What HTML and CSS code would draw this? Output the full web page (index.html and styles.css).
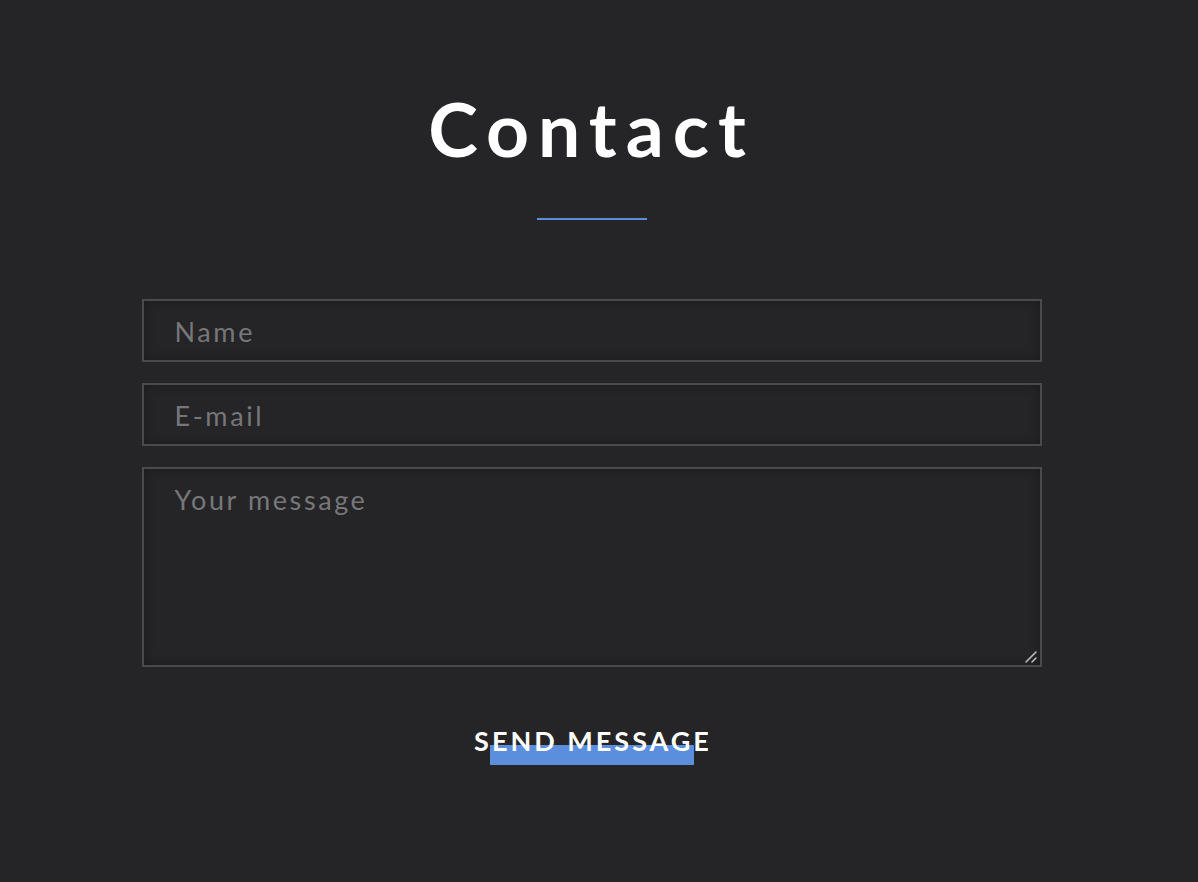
FILE: index.html
```html
<!DOCTYPE html>
<html lang="en">
<head>
<meta charset="utf-8">
<title>Contact</title>
<link rel="stylesheet" href="styles.css">
</head>
<body>
<main class="page">
  <section class="contact">
    <h1 class="title">Contact</h1>
    <div class="rule"></div>
    <form class="form">
      <input class="field" type="text" placeholder="Name">
      <input class="field" type="email" placeholder="E-mail">
      <div class="area-wrap">
        <textarea class="field area" placeholder="Your message"></textarea>
        <span class="grip" aria-hidden="true">
          <svg width="14" height="14" viewBox="0 0 14 14">
            <line x1="2" y1="12" x2="12" y2="2" stroke="#bbb" stroke-width="1.6" stroke-linecap="round"/>
            <line x1="8" y1="12" x2="12" y2="8" stroke="#bbb" stroke-width="1.6" stroke-linecap="round"/>
          </svg>
        </span>
      </div>
      <div class="actions">
        <button class="send" type="button"><span class="send-bar"></span><span class="send-text">SEND MESSAGE</span></button>
      </div>
    </form>
  </section>
</main>
</body>
</html>
```

FILE: styles.css
```css
html, body {
  margin: 0;
  padding: 0;
  background: #252527;
  height: 100%;
}
body {
  font-family: "Lato", "Liberation Sans", sans-serif;
  color: #fff;
}
.page {
  width: 1183px;
}
.contact {
  width: 900px;
  margin: 0 auto;
  padding-top: 84px;
  display: flex;
  flex-direction: column;
  align-items: center;
}
.title {
  margin: 0;
  font-size: 75px;
  font-weight: 700;
  line-height: 88px;
  letter-spacing: 9px;
  padding-left: 0;
}
.rule {
  width: 110px;
  height: 2px;
  background: #5b8dd9;
  margin-top: 46px;
}
.form {
  width: 100%;
  margin-top: 79px;
  display: flex;
  flex-direction: column;
  gap: 21px;
}
.field {
  box-sizing: border-box;
  width: 100%;
  height: 63px;
  margin: 0;
  padding: 2px 31px 0;
  border: 2px solid #4a4a4c;
  background: #252527;
  box-shadow: inset 0 0 10px rgba(0, 0, 0, 0.35);
  color: #ddd;
  font-family: "Lato", "Liberation Sans", sans-serif;
  font-size: 27px;
  letter-spacing: 2.6px;
  outline: none;
  border-radius: 0;
}
.field::placeholder {
  color: #77777a;
}
.area-wrap {
  position: relative;
}
.area {
  height: 200px;
  padding-top: 14px;
  resize: none;
  display: block;
}
.grip {
  position: absolute;
  right: 4px;
  bottom: 3px;
  width: 14px;
  height: 14px;
  pointer-events: none;
}
.grip svg {
  display: block;
}
.actions {
  display: flex;
  justify-content: center;
  margin-top: 38px;
}
.send {
  position: relative;
  background: none;
  border: 0;
  padding: 0;
  cursor: pointer;
  font-family: "Lato", "Liberation Sans", sans-serif;
  font-weight: 700;
  font-size: 27px;
  letter-spacing: 3px;
  color: #fff;
  line-height: 30px;
}
.send-bar {
  position: absolute;
  left: 19px;
  right: 18px;
  top: 19px;
  height: 20px;
  background: #5b8fdd;
}
.send-text {
  position: relative;
  padding-left: 3px;
}
```
